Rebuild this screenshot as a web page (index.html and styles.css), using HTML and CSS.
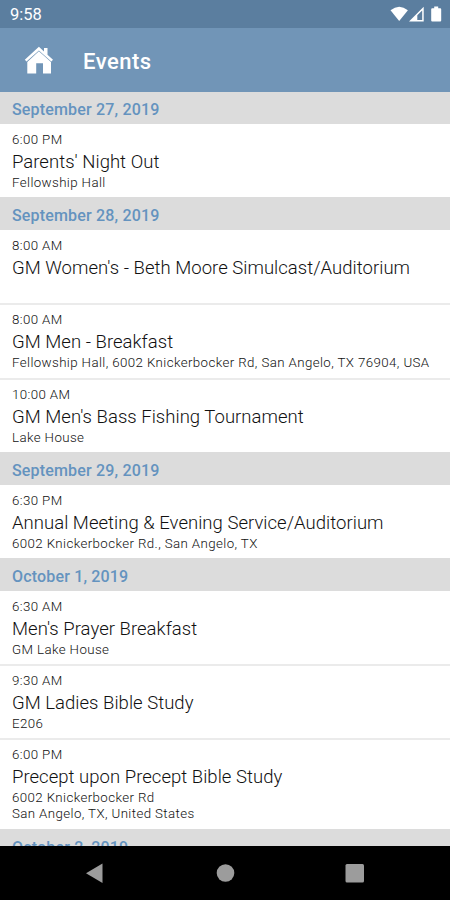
FILE: index.html
```html
<!DOCTYPE html>
<html lang="en">
<head>
<meta charset="utf-8">
<title>Events</title>
<link rel="stylesheet" href="styles.css">
</head>
<body>
<div class="screen">
  <div class="status">
    <span class="clock">9:58</span>
    <svg class="status-icons" width="54" height="18" viewBox="0 0 54 18" fill="#fff">
      <path d="M1.500 5.200Q10.200-1.800 18.900 5.200L10.200 16Z"/>
      <path fill-rule="evenodd" d="M20 16.500 34.700 1.800V16.500ZM28.300 10.300V15H33.200V5.400Z"/>
      <path d="M43.200 3.300h2V1.500h4v1.800h2q1 0 1 1v11.200q0 1-1 1h-8q-1 0-1-1V4.300q0-1 1-1Z"/>
    </svg>
  </div>
  <header class="bar">
    <svg class="home" width="30" height="28" viewBox="0 0 30 28" fill="#fff">
      <path d="M.8 13.800 14.900.8l5.100 4.700V2h3.500v6.700l5.500 5.100-1.700 1.700L14.900 4.400 2.500 15.500Z"/>
      <path d="M14.900 5.200 27 16v11.500h-8V17.300h-6.800v10.200H3.300V16Z"/>
    </svg>
    <h1>Events</h1>
  </header>
  <main class="list">
    <section>
      <h2>September 27, 2019</h2>
      <article><p class="time">6:00 PM</p><h3>Parents' Night Out</h3><p class="place">Fellowship Hall</p></article>
    </section>
    <section>
      <h2>September 28, 2019</h2>
      <article><p class="time">8:00 AM</p><h3>GM Women's - Beth Moore Simulcast/Auditorium</h3><p class="place"></p></article>
      <article><p class="time">8:00 AM</p><h3>GM Men - Breakfast</h3><p class="place">Fellowship Hall, 6002 Knickerbocker Rd, San Angelo, TX 76904, USA</p></article>
      <article><p class="time">10:00 AM</p><h3>GM Men's Bass Fishing Tournament</h3><p class="place">Lake House</p></article>
    </section>
    <section>
      <h2>September 29, 2019</h2>
      <article><p class="time">6:30 PM</p><h3>Annual Meeting &amp; Evening Service/Auditorium</h3><p class="place">6002 Knickerbocker Rd., San Angelo, TX</p></article>
    </section>
    <section>
      <h2>October 1, 2019</h2>
      <article><p class="time">6:30 AM</p><h3>Men's Prayer Breakfast</h3><p class="place">GM Lake House</p></article>
      <article><p class="time">9:30 AM</p><h3>GM Ladies Bible Study</h3><p class="place">E206</p></article>
      <article><p class="time">6:00 PM</p><h3>Precept upon Precept Bible Study</h3><p class="place">6002 Knickerbocker Rd<br>San Angelo, TX, United States</p></article>
    </section>
    <section>
      <h2>October 2, 2019</h2>
    </section>
  </main>
  <nav class="nav">
    <svg width="450" height="54" viewBox="0 0 450 54" fill="#9c9c9c">
      <path d="M86 27.300 102.500 17.500V37Z"/>
      <circle cx="225.500" cy="27" r="8.800"/>
      <rect x="345.500" y="18" width="18.500" height="18.500" rx="1.500"/>
    </svg>
  </nav>
</div>
</body>
</html>
```
FILE: styles.css
```css
* { box-sizing: border-box; }
body { margin: 0; font-family: Roboto, sans-serif; background: #fff; }
h1, h2, h3, p { margin: 0; }
.screen { width: 450px; height: 900px; display: flex; flex-direction: column; overflow: hidden; }
.status {
  height: 28px; flex: none; padding: 0 7px 0 10px;
  display: flex; align-items: center; justify-content: space-between;
  background: #5b7e9f; color: #fff;
}
.clock { font-size: 16.500px; line-height: 28px; padding-top: 2px; }
.bar {
  height: 63.500px; flex: none; padding: 3px 0 0 24px;
  display: flex; align-items: center; gap: 29px;
  background: #7195b7; color: #fff;
}
.home { margin-top: -3px; }
h1 { font-size: 22px; font-weight: 500; line-height: 30px; letter-spacing: .5px; padding-top: 2px; }
.list { flex: 1; min-height: 0; overflow: hidden; }
h2 {
  height: 32.900px; padding: 3px 12px 0; background: #dcdcdc; color: #6493bf;
  font-size: 16px; font-weight: 500; line-height: 32px; letter-spacing: .17px;
}
section:first-child h2 { height: 32.500px; padding-top: 2px; }
article { min-height: 73.300px; padding: 7px 12px 6.200px; color: #111; }
article + article { border-top: 2px solid #ebebeb; min-height: 74.200px; padding-top: 6px; }
.time, .place { font-size: 13.300px; line-height: 16px; min-height: 16px; font-weight: 300; color: #111; letter-spacing: .39px; white-space: nowrap; }
.time { line-height: 18px; }
h3 { font-size: 18.500px; line-height: 26px; font-weight: 300; letter-spacing: .03px; white-space: nowrap; }
.nav { height: 54px; flex: none; background: #000; }
.nav svg { display: block; }
```
